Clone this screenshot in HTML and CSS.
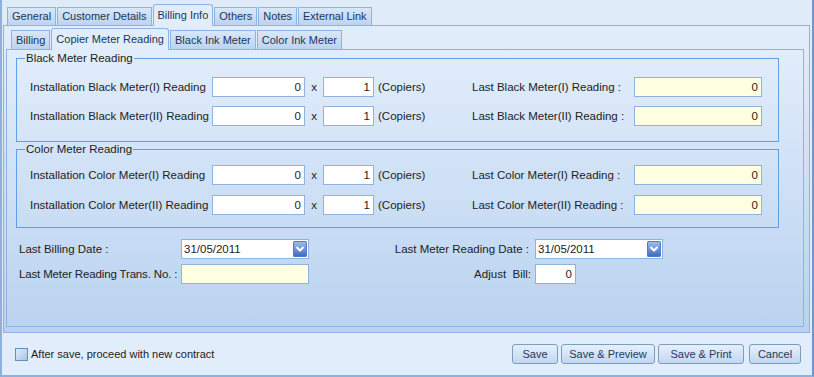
FILE: index.html
```html
<!DOCTYPE html>
<html lang="en">
<head>
    <meta charset="UTF-8">
    <title>Contract - Billing Info</title>
    <link rel="stylesheet" href="styles.css">
</head>
<body>
    <div class="window">
        <div class="main-tabs">
            <div class="tab">General</div>
            <div class="tab">Customer Details</div>
            <div class="tab active">Billing Info</div>
            <div class="tab">Others</div>
            <div class="tab">Notes</div>
            <div class="tab">External Link</div>
        </div>
        <div class="tab-panel">
            <div class="sub-tabs">
                <div class="tab">Billing</div>
                <div class="tab active">Copier Meter Reading</div>
                <div class="tab">Black Ink Meter</div>
                <div class="tab">Color Ink Meter</div>
            </div>
            <div class="sub-panel">
                <fieldset class="group">
                    <legend>Black Meter Reading</legend>
                    <div class="meter-grid">
                        <label>Installation Black Meter(I) Reading</label>
                        <input class="num" type="text" value="0">
                        <span class="times">x</span>
                        <input class="num" type="text" value="1">
                        <span class="copiers">(Copiers)</span>
                        <label class="last-label">Last Black Meter(I) Reading :</label>
                        <input class="num readonly" type="text" value="0">

                        <label>Installation Black Meter(II) Reading</label>
                        <input class="num" type="text" value="0">
                        <span class="times">x</span>
                        <input class="num" type="text" value="1">
                        <span class="copiers">(Copiers)</span>
                        <label class="last-label">Last Black Meter(II) Reading :</label>
                        <input class="num readonly" type="text" value="0">
                    </div>
                </fieldset>
                <fieldset class="group group-color">
                    <legend>Color Meter Reading</legend>
                    <div class="meter-grid">
                        <label>Installation Color Meter(I) Reading</label>
                        <input class="num" type="text" value="0">
                        <span class="times">x</span>
                        <input class="num" type="text" value="1">
                        <span class="copiers">(Copiers)</span>
                        <label class="last-label">Last Color Meter(I) Reading :</label>
                        <input class="num readonly" type="text" value="0">

                        <label>Installation Color Meter(II) Reading</label>
                        <input class="num" type="text" value="0">
                        <span class="times">x</span>
                        <input class="num" type="text" value="1">
                        <span class="copiers">(Copiers)</span>
                        <label class="last-label">Last Color Meter(II) Reading :</label>
                        <input class="num readonly" type="text" value="0">
                    </div>
                </fieldset>
                <div class="dates-grid">
                    <label>Last Billing Date :</label>
                    <div class="date-field">
                        <span>31/05/2011</span>
                        <span class="dd-btn">
                            <svg width="10" height="8" viewBox="0 0 10 8"><path d="M1.5 2 L5 5.5 L8.5 2" fill="none" stroke="#fff" stroke-width="2"/></svg>
                        </span>
                    </div>
                    <label class="right-label">Last Meter Reading Date :</label>
                    <div class="date-field">
                        <span>31/05/2011</span>
                        <span class="dd-btn">
                            <svg width="10" height="8" viewBox="0 0 10 8"><path d="M1.5 2 L5 5.5 L8.5 2" fill="none" stroke="#fff" stroke-width="2"/></svg>
                        </span>
                    </div>

                    <label class="trans-label">Last Meter Reading Trans. No. :</label>
                    <input class="text-box readonly" type="text" value="">
                    <label class="right-label adjust">Adjust&nbsp; Bill:</label>
                    <input class="num adjust-box" type="text" value="0">
                </div>
            </div>
        </div>
        <div class="footer">
            <label class="check">
                <span class="check-box"></span>
                After save, proceed with new contract
            </label>
            <div class="buttons">
                <button class="btn btn-save">Save</button>
                <button class="btn btn-preview">Save &amp; Preview</button>
                <button class="btn btn-print">Save &amp; Print</button>
                <button class="btn btn-cancel">Cancel</button>
            </div>
        </div>
    </div>
</body>
</html>
```

FILE: styles.css
```css
body {
    margin: 0;
    padding: 0;
    background-color: #dfeaf8;
    font-family: "Liberation Sans", Arial, sans-serif;
    font-size: 11px;
    color: #222;
}
label,
span {
    white-space: nowrap;
}
.window {
    box-sizing: border-box;
    width: 814px;
    height: 377px;
    display: flex;
    flex-direction: column;
    background-color: #e0ebfa;
    border-left: 2px solid #8db0de;
    border-right: 2px solid #7097cb;
    border-bottom: 2px solid #8db0de;
}

/* tabs */
.main-tabs,
.sub-tabs {
    display: flex;
    align-items: flex-end;
    gap: 1px;
}
.main-tabs {
    height: 25px;
    padding-left: 5px;
}
.sub-tabs {
    height: 23px;
    padding-left: 7px;
}
.tab {
    height: 17px;
    line-height: 17px;
    padding: 0 4px;
    border: 1px solid #8db2e3;
    border-bottom: none;
    background: linear-gradient(#d9e7f9, #bcd3f1);
    color: #1b3559;
    white-space: nowrap;
}
.tab.active {
    height: 21px;
    line-height: 20px;
    position: relative;
    z-index: 1;
    margin-bottom: -1px;
    background: #e2edfb;
    border-radius: 3px 3px 0 0;
}
.sub-tabs .tab {
    height: 18px;
    line-height: 18px;
}
.sub-tabs .tab.active {
    height: 21px;
    line-height: 21px;
}

.tab-panel {
    height: 308px;
    box-sizing: border-box;
    margin: 0 2px 0 1px;
    border: 1px solid #8db2e3;
    background: linear-gradient(#e2edfb, #b9d2f0);
}
.sub-panel {
    box-sizing: border-box;
    height: 278px;
    margin: 0 5px 0 2px;
    border: 1px solid #8db2e3;
    background: linear-gradient(#e2edfb, #bad3f0);
    padding: 1px 24px 0 9px;
    font-size: 11.5px;
}

/* group boxes */
.group {
    margin: 0;
    padding: 12px 0 15px 0;
    border: 1px solid #5ea1ea;
    border-radius: 0;
}
.group legend {
    padding: 0 1px;
    margin-left: 8px;
    line-height: 14px;
    color: #222;
}
.group-color {
    padding-top: 9px;
    padding-bottom: 12px;
}
.meter-grid {
    display: grid;
    grid-template-columns: 182px 93px 18px 51px 98px 162px 128px;
    row-gap: 9px;
    align-items: center;
    padding-left: 13px;
}
.group-color .meter-grid {
    row-gap: 10px;
}
.times {
    text-align: center;
}
.copiers {
    padding-left: 4px;
}

input {
    box-sizing: border-box;
    height: 20px;
    margin: 0;
    border: 1px solid #8fb2de;
    background: #fff;
    font-family: inherit;
    font-size: 11.5px;
    color: #222;
    padding: 0 3px;
    outline: none;
}
.num {
    text-align: right;
}
.readonly {
    background: #ffffe1;
}

/* dates */
.dates-grid {
    display: grid;
    grid-template-columns: 162px 128px 226px 128px;
    grid-template-rows: 20px 20px;
    row-gap: 5px;
    align-items: center;
    margin-top: 11px;
    padding-left: 3px;
}
.trans-label {
    letter-spacing: -0.15px;
}
.right-label {
    text-align: right;
    padding-right: 6px;
}
.right-label.adjust {
    padding-right: 4px;
}
.date-field {
    box-sizing: border-box;
    height: 20px;
    display: flex;
    align-items: center;
    border: 1px solid #8fb2de;
    background: #fff;
    padding-left: 2px;
}
.dd-btn {
    margin-left: auto;
    margin-right: 1px;
    width: 14px;
    height: 16px;
    display: flex;
    align-items: center;
    justify-content: center;
    border-radius: 2px;
    background: linear-gradient(#a4c2ee, #3a66bd);
    box-shadow: inset 0 0 0 1px #4f7cc8;
}
.adjust-box {
    width: 41px;
}

/* footer */
.footer {
    flex: 1;
    display: flex;
    align-items: center;
    justify-content: space-between;
    padding: 0 11px 0 13px;
    background: #e2edfb;
}
.check {
    display: flex;
    align-items: center;
    gap: 3px;
}
.check-box {
    width: 11px;
    height: 11px;
    border: 1px solid #6c8cbc;
    background: linear-gradient(135deg, #e0ebfa, #a9c4ea);
}
.buttons {
    display: flex;
    gap: 3px;
}
.btn {
    height: 20px;
    padding: 0;
    border: 1px solid #7b9ebd;
    border-radius: 3px;
    background: linear-gradient(#e6f0fc, #c2d7f2);
    font-family: inherit;
    font-size: 11px;
    color: #1e395b;
    cursor: pointer;
}
.btn-save {
    width: 46px;
}
.btn-preview {
    width: 94px;
}
.btn-print {
    width: 86px;
}
.btn-cancel {
    width: 52px;
    margin-left: 2px;
}
```
